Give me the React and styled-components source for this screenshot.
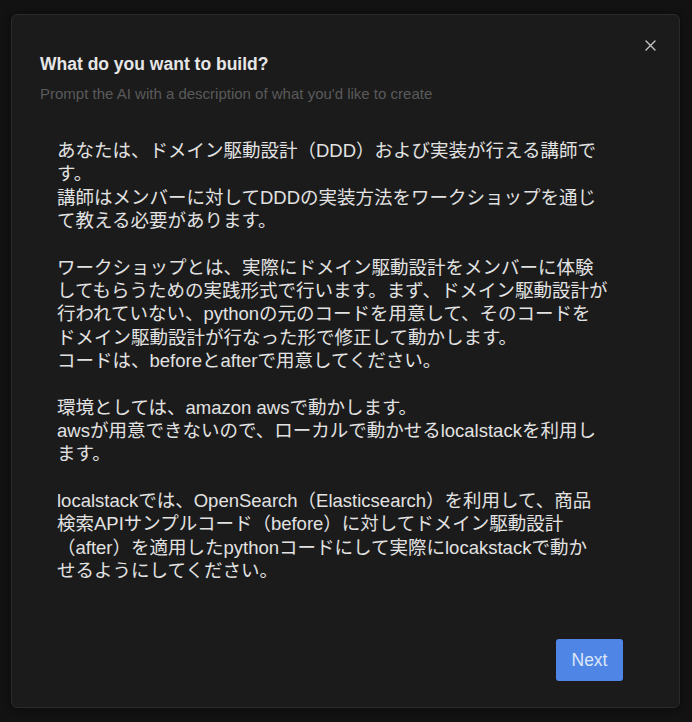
import styled, { createGlobalStyle } from "styled-components";

const GlobalStyle = createGlobalStyle`
    html, body {
        margin: 0;
        padding: 0;
        background: #121212;
    }

    #root {
        height: 722px;
        padding: 14px 12px 14px 11px;
        box-sizing: border-box;
    }
`;

const DialogWrapper = styled.div`
    position: relative;
    height: 100%;
    box-sizing: border-box;
    display: flex;
    flex-direction: column;

    background: #1b1b1b;
    border: 1px solid #2b2b2b;
    border-radius: 6px;
    box-shadow: 0 0 6px rgba(0, 0, 0, 0.5);
    padding: 38px 56px 26px 28px;
    font-family: "Liberation Sans", "Noto Sans CJK JP", sans-serif;
`;

const CloseButton = styled.button`
    position: absolute;
    top: 20px;
    right: 19px;
    width: 20px;
    height: 20px;
    padding: 0;
    border: none;
    background: transparent;
    display: flex;
    align-items: center;
    justify-content: center;
    cursor: pointer;
`;

const Title = styled.h2`
    margin: 0;
    font-size: 17.5px;
    line-height: 22px;
    font-weight: 700;
    color: #e6e6e6;
`;

const Subtitle = styled.p`
    margin: 11px 0 0 0;
    font-size: 15px;
    line-height: 16px;
    color: #5a5a5a;
`;

const PromptText = styled.div`
    flex: 1;
    margin-top: 37px;
    padding-left: 17px;
    display: flex;
    flex-direction: column;
    row-gap: 23.33px;

    font-family: "Liberation Sans", "Noto Sans CJK JP", sans-serif;
    font-size: 18.5px;
    line-height: 23.33px;
    color: #e2e2e2;
`;

const Paragraph = styled.p`
    margin: 0;
`;

const Line = styled.span`
    display: block;
    white-space: nowrap;
`;

const Footer = styled.div`
    display: flex;
    justify-content: flex-end;
`;

const NextButton = styled.button`
    width: 67px;
    height: 42px;
    border: none;
    border-radius: 3px;
    background: #4f86e6;
    color: #dce6f8;
    font-family: "Liberation Sans", sans-serif;
    font-size: 17.5px;
    cursor: pointer;
`;

// the prompt, broken where the textarea wraps it
const promptParagraphs = [
    [
        "あなたは、ドメイン駆動設計（DDD）および実装が行える講師で",
        "す。",
        "講師はメンバーに対してDDDの実装方法をワークショップを通じ",
        "て教える必要があります。",
    ],
    [
        "ワークショップとは、実際にドメイン駆動設計をメンバーに体験",
        "してもらうための実践形式で行います。まず、ドメイン駆動設計が",
        "行われていない、pythonの元のコードを用意して、そのコードを",
        "ドメイン駆動設計が行なった形で修正して動かします。",
        "コードは、beforeとafterで用意してください。",
    ],
    [
        "環境としては、amazon awsで動かします。",
        "awsが用意できないので、ローカルで動かせるlocalstackを利用し",
        "ます。",
    ],
    [
        "localstackでは、OpenSearch（Elasticsearch）を利用して、商品",
        "検索APIサンプルコード（before）に対してドメイン駆動設計",
        "（after）を適用したpythonコードにして実際にlocakstackで動か",
        "せるようにしてください。",
    ],
];

const App = () => {
    return (
        <>
            <GlobalStyle />
            <DialogWrapper>
                <CloseButton aria-label="Close">
                    <svg width="11" height="11" viewBox="0 0 11 11">
                        <path d="M1 1 L10 10 M10 1 L1 10" stroke="#c4c4c4" strokeWidth="1.4" strokeLinecap="round" />
                    </svg>
                </CloseButton>
                <Title>What do you want to build?</Title>
                <Subtitle>Prompt the AI with a description of what you'd like to create</Subtitle>
                <PromptText lang="ja">
                    {promptParagraphs.map((lines, index) => (
                        <Paragraph key={index}>
                            {lines.map((line, lineIndex) => (
                                <Line key={lineIndex}>{line}</Line>
                            ))}
                        </Paragraph>
                    ))}
                </PromptText>
                <Footer>
                    <NextButton>Next</NextButton>
                </Footer>
            </DialogWrapper>
        </>
    );
}

export default App;
